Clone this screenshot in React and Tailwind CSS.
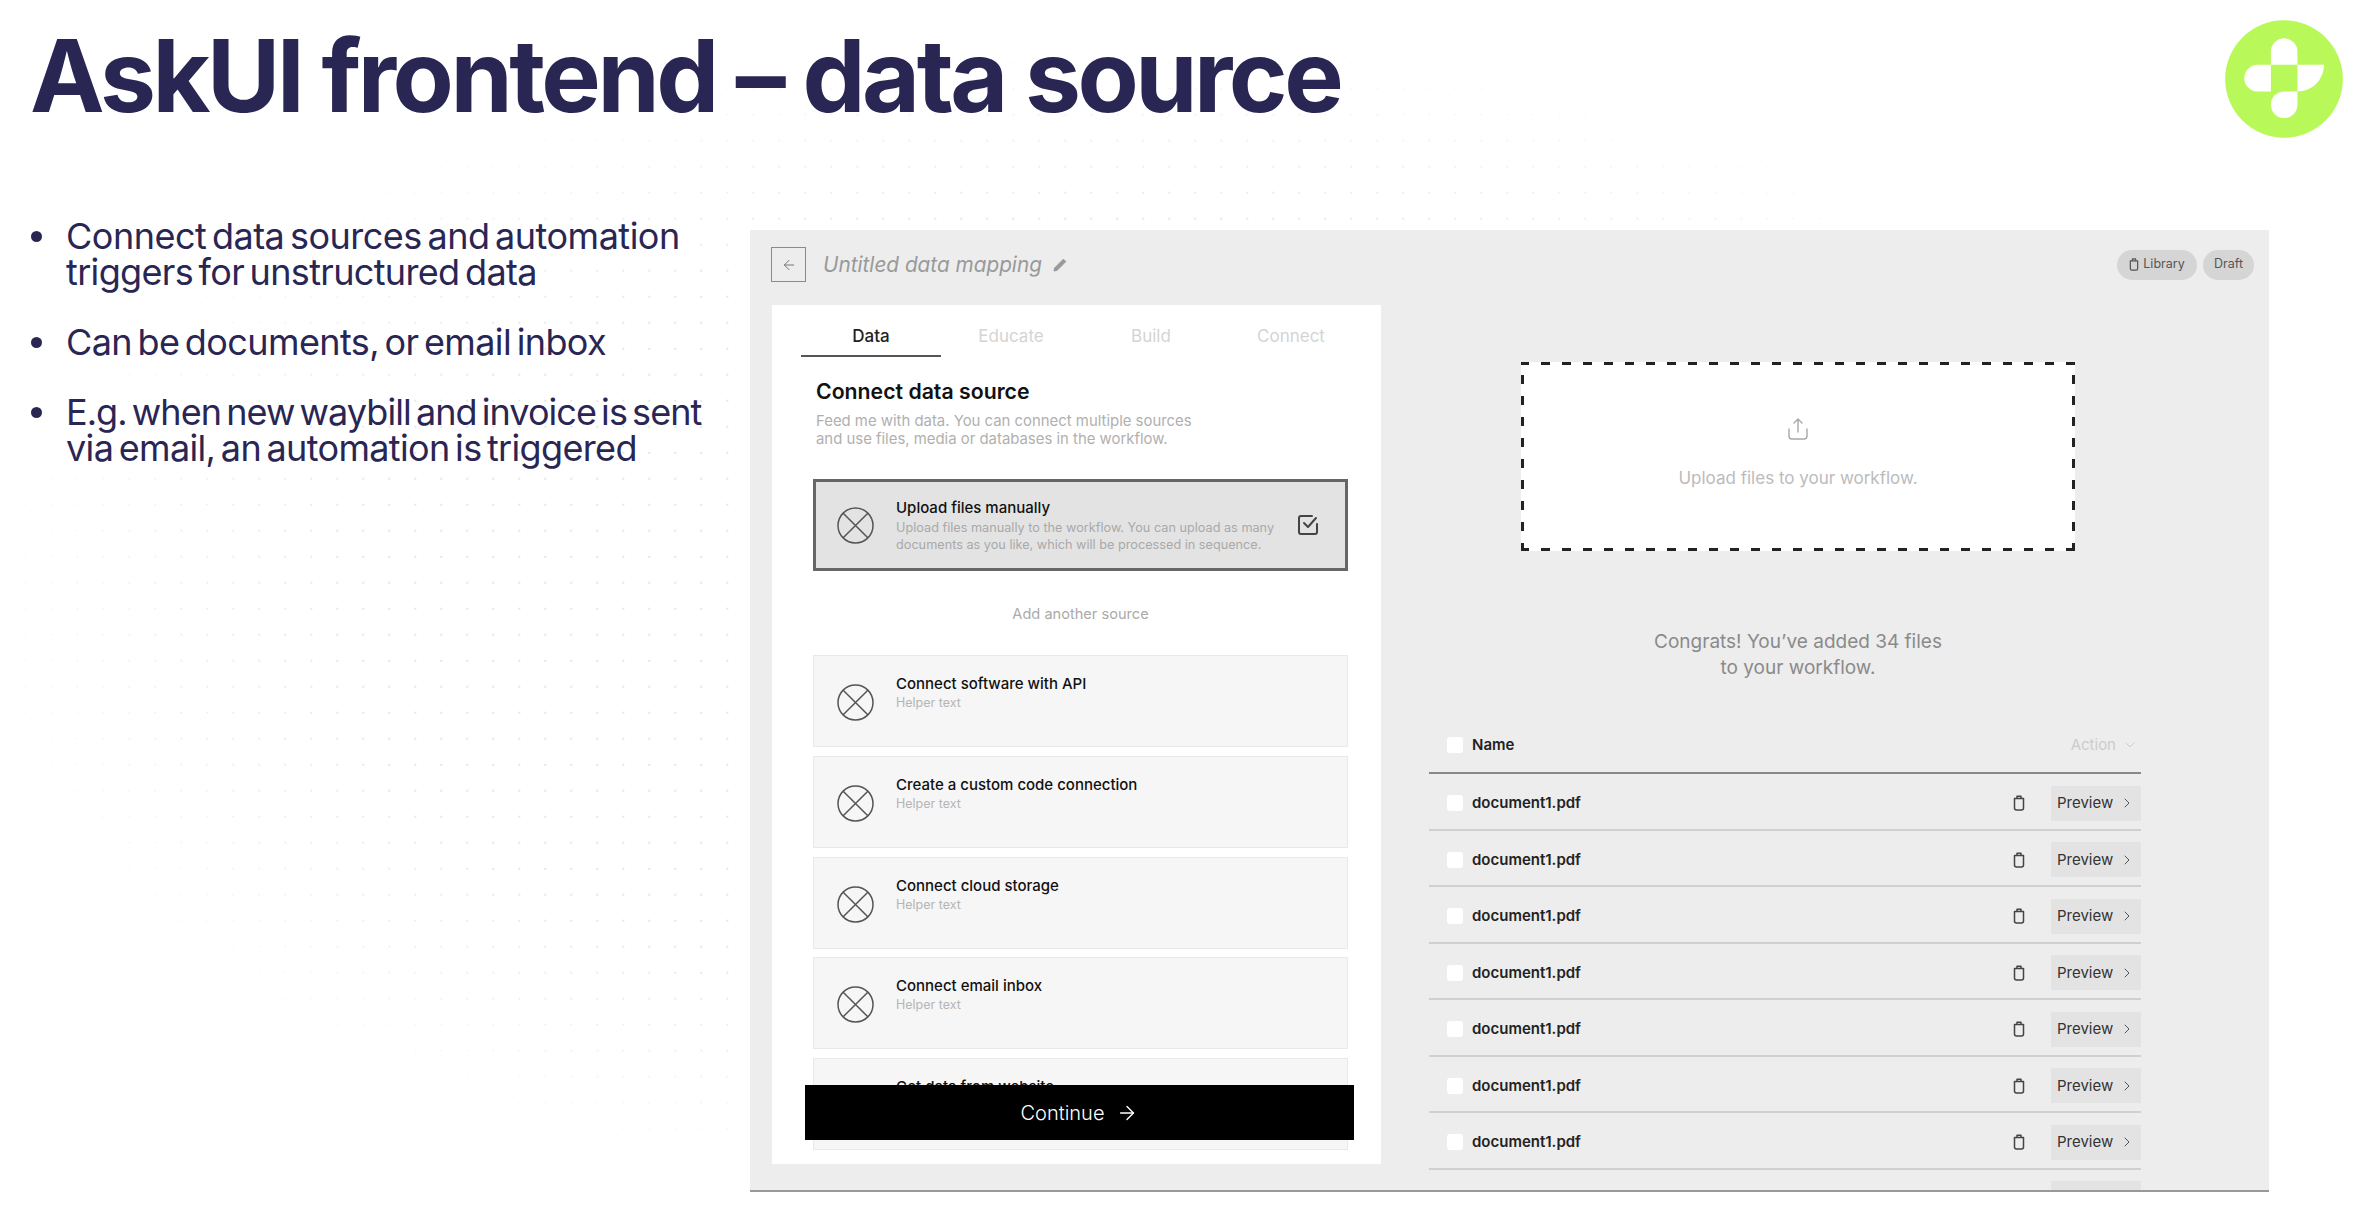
import { ArrowLeft, ArrowRight, ChevronDown, ChevronRight } from 'lucide-react';

const bullets = [
  [
    { text: 'Connect data sources and automation', tracking: 'tracking-[-0.5px]' },
    { text: 'triggers for unstructured data', tracking: 'tracking-[-0.65px]' },
  ],
  [{ text: 'Can be documents, or email inbox', tracking: 'tracking-[-0.6px]' }],
  [
    { text: 'E.g. when new waybill and invoice is sent', tracking: 'tracking-[-0.95px]' },
    { text: 'via email, an automation is triggered', tracking: 'tracking-[-0.65px]' },
  ],
];

const tabs = ['Data', 'Educate', 'Build', 'Connect'];

const sources = [
  'Connect software with API',
  'Create a custom code connection',
  'Connect cloud storage',
  'Connect email inbox',
  'Get data from website',
];

const files = Array.from({ length: 8 }, (_, i) => i);

function Logo() {
  return (
    <svg className="w-[118px] h-[118px]" viewBox="135 60 355 355">
      <circle cx="312.5" cy="237.5" r="177" fill="#b8f858" />
      <g fill="#fff">
        <path d="M273 195v-40a40 40 0 0 1 80 0v40z" />
        <path d="M273 195v80h-40a40 40 0 0 1 0-80z" />
        <path d="M353 195h80a80 80 0 0 1-80 80z" />
        <path d="M353 275v40a40 40 0 0 1-80 0a40 40 0 0 1 40-40z" />
      </g>
    </svg>
  );
}

function CrossCircle() {
  return (
    <svg className="w-[37px] h-[37px] shrink-0" viewBox="0 0 37 37" fill="none" stroke="#555" strokeWidth="1.5">
      <circle cx="18.5" cy="18.5" r="17.5" />
      <path d="M6.2 6.2l24.6 24.6M30.8 6.2L6.2 30.8" />
    </svg>
  );
}

function CheckBoxIcon() {
  return (
    <svg className="w-6 h-6" viewBox="0 0 24 24" fill="none" stroke="#444" strokeWidth="2" strokeLinecap="round" strokeLinejoin="round">
      <path d="M21 11v8a2 2 0 0 1-2 2H5a2 2 0 0 1-2-2V5a2 2 0 0 1 2-2h11" />
      <path d="M8 10l4 4 8-9" />
    </svg>
  );
}

function TrashIcon({ className }) {
  return (
    <svg className={className} viewBox="0 0 12 16" fill="none" stroke="currentColor" strokeWidth="1.5" strokeLinejoin="round">
      <path d="M1.5 3.5h9V13a2 2 0 0 1-2 2h-5a2 2 0 0 1-2-2z" />
      <path d="M4 3.5V1.2h4v2.3" />
    </svg>
  );
}

function UploadIcon() {
  return (
    <svg className="w-[22px] h-[24px]" viewBox="0 0 22 24" fill="none" stroke="#a8a8a8" strokeWidth="1.4" strokeLinecap="round" strokeLinejoin="round">
      <path d="M11 15V2M7 6l4-4 4 4" />
      <path d="M2 12v7a3 3 0 0 0 3 3h12a3 3 0 0 0 3-3v-7" />
    </svg>
  );
}

function PencilIcon() {
  return (
    <svg className="w-4 h-4 ml-[10px]" viewBox="0 0 16 16" fill="#999" stroke="#999" strokeWidth="1" strokeLinejoin="round">
      <path d="M2 14l.6-3L11.4 2.2l2.4 2.4L5 13.4z" />
    </svg>
  );
}

function SourceRow({ title, selected, children }) {
  return (
    <div
      className={
        selected
          ? 'h-[92px] border-[3px] border-[#666] bg-[#e3e3e3] flex items-center pl-[21px] pr-[25px]'
          : 'h-[92px] border border-[#e9e9e9] bg-[#f6f6f6] flex items-start pl-[23px] pt-[28px]'
      }
    >
      <CrossCircle />
      <div className={selected ? 'ml-[22px] flex-1' : 'ml-[22px] -mt-[10px]'}>
        <p className="text-[15px] leading-[20px] font-medium text-[#111]">{title}</p>
        {children}
      </div>
      {selected && <CheckBoxIcon />}
    </div>
  );
}

function FileRow() {
  return (
    <div className="h-[56.5px] shrink-0 border-b-2 border-[#d0d0d0] flex items-center pl-[18px] pt-[4px]">
      <span className="w-4 h-4 rounded-[3px] bg-white" />
      <span className="ml-[9px] text-[15px] font-semibold text-[#222] flex-1">document1.pdf</span>
      <TrashIcon className="w-3 h-4 mr-[26px] text-[#444]" />
      <div className="w-[90px] h-[35px] bg-[#e3e3e3] flex items-center pl-[6px] text-[15px] text-[#333]">
        Preview
        <ChevronRight className="w-4 h-4 ml-[6px] text-[#555]" strokeWidth={1.5} />
      </div>
    </div>
  );
}

export default function App() {
  return (
    <div className="w-[2356px] h-[1216px] overflow-hidden flex flex-col bg-white font-[Inter,sans-serif] [background-image:radial-gradient(ellipse_1150px_600px_at_1100px_620px,transparent_65%,white_100%),radial-gradient(circle,#e6e6e6_1.1px,transparent_1.5px)] [background-size:100%_100%,26px_26px] [background-position:0_0,12.3px_-2.3px]">
      {/* Slide header */}
      <div className="h-[216px] shrink-0 flex justify-between">
        <h1 className="pl-[30px] pt-[16px] text-[100px] leading-[120px] font-bold text-[#2a2654] tracking-[-0.035em]">
          AskUI frontend – data source
        </h1>
        <div className="pt-[20px] pr-[13px]">
          <Logo />
        </div>
      </div>

      <div className="flex-1 flex">
        {/* Bullets */}
        <ul className="w-[750px] shrink-0 pl-[31px] pt-[2px] flex flex-col gap-[34px] text-[36px] leading-[36px] text-[#2a2654] [word-spacing:-4px]">
          {bullets.map((lines) => (
            <li key={lines[0].text} className="flex">
              <span className="w-[11px] h-[11px] mt-[13px] mr-[24px] rounded-full bg-[#2a2654] shrink-0" />
              <div>
                {lines.map((line) => (
                  <p key={line.text} className={`whitespace-nowrap ${line.tracking}`}>{line.text}</p>
                ))}
              </div>
            </li>
          ))}
        </ul>

        {/* Embedded app screenshot */}
        <div className="w-[1519px] h-[962px] mt-[14px] bg-[#ededed] border-b-2 border-[#999] overflow-hidden flex flex-col">
          <div className="h-[75px] shrink-0 pl-[21px] pr-[15px] pb-[6px] flex items-center justify-between">
            <div className="flex items-center">
              <div className="w-[35px] h-[35px] border-[1.5px] border-[#8a8a8a] flex items-center justify-center">
                <ArrowLeft className="w-4 h-4 text-[#777]" strokeWidth={1.5} />
              </div>
              <span className="ml-[17px] text-[20.75px] italic text-[#999]">Untitled data mapping</span>
              <PencilIcon />
            </div>
            <div className="flex gap-[6px] text-[12.5px] text-[#555]">
              <div className="w-[80px] h-[30px] rounded-full bg-[#d5d5d5] flex items-center justify-center gap-[4px]">
                <TrashIcon className="w-[10px] h-[13px]" />
                Library
              </div>
              <div className="w-[51px] h-[30px] rounded-full bg-[#d5d5d5] flex items-center justify-center">Draft</div>
            </div>
          </div>

          <div className="flex-1 min-h-0 flex pl-[22px]">
            {/* Wizard card */}
            <div className="w-[609px] h-[859px] shrink-0 bg-white relative overflow-hidden">
              <div className="ml-[29px] mt-[15px] flex">
                {tabs.map((tab, i) => (
                  <div
                    key={tab}
                    className={
                      i === 0
                        ? 'w-[140px] h-[37px] border-b-2 border-[#555] text-center text-[17px] leading-[33px] font-medium text-[#222]'
                        : 'w-[140px] h-[37px] text-center text-[17px] leading-[33px] text-[#d4d4d4]'
                    }
                  >
                    {tab}
                  </div>
                ))}
              </div>
              <div className="ml-[44px]">
                <h2 className="mt-[20px] text-[21.25px] leading-[28px] font-semibold text-[#111]">Connect data source</h2>
                <p className="mt-[7px] text-[14.9px] leading-[18px] text-[#b0b0b0]">
                  Feed me with data. You can connect multiple sources
                  <br />
                  and use files, media or databases in the workflow.
                </p>
              </div>
              <div className="ml-[41px] w-[535px] mt-[31px]">
                <SourceRow title="Upload files manually" selected>
                  <p className="mt-[1px] text-[12.7px] leading-[17px] text-[#a9a9a9] whitespace-nowrap">
                    Upload files manually to the workflow. You can upload as many
                    <br />
                    documents as you like, which will be processed in sequence.
                  </p>
                </SourceRow>
                <p className="mt-[33px] mb-[31px] text-center text-[14.6px] leading-[20px] text-[#aaa]">Add another source</p>
                <div className="flex flex-col gap-[8.75px]">
                  {sources.map((title) => (
                    <SourceRow key={title} title={title}>
                      <p className="mt-[1px] text-[12.5px] leading-[16px] text-[#b5b5b5]">Helper text</p>
                    </SourceRow>
                  ))}
                </div>
              </div>
              <div className="absolute left-[33px] top-[780px] w-[549px] h-[55px] bg-black flex items-center justify-center gap-[12px] text-white text-[20px] font-light">
                Continue
                <ArrowRight className="w-[22px] h-[22px]" strokeWidth={1.5} />
              </div>
            </div>

            {/* Upload side */}
            <div className="ml-[48px] w-[712px] shrink-0 flex flex-col">
              <div className="ml-[92px] w-[554px] shrink-0">
                <div className="mt-[57px] h-[189px] bg-white bg-no-repeat [background-image:repeating-linear-gradient(90deg,#222_-1px_8px,transparent_8px_20px),repeating-linear-gradient(90deg,#222_-1px_8px,transparent_8px_20px),repeating-linear-gradient(0deg,#222_-1px_8px,transparent_8px_20px),repeating-linear-gradient(0deg,#222_-1px_8px,transparent_8px_20px)] [background-size:100%_3px,100%_3px,3px_100%,3px_100%] [background-position:0_0,0_100%,0_0,100%_0] flex flex-col items-center pt-[55px]">
                  <UploadIcon />
                  <p className="mt-[25px] text-[17px] leading-[24px] text-[#bbb]">Upload files to your workflow.</p>
                </div>
                <p className="mt-[78px] text-center text-[19px] leading-[26px] text-[#8a8a8a]">
                  Congrats! You’ve added 34 files
                  <br />
                  to your workflow.
                </p>
              </div>

              <div className="mt-[37px] h-[56px] shrink-0 border-b-2 border-[#888] flex items-center pl-[18px]">
                <span className="w-4 h-4 rounded-[3px] bg-white" />
                <span className="ml-[9px] text-[15px] font-semibold text-[#222] flex-1">Name</span>
                <span className="text-[15px] text-[#ccc]">Action</span>
                <ChevronDown className="w-4 h-4 ml-[6px] mr-[3px] text-[#ccc]" strokeWidth={1.5} />
              </div>
              {files.map((i) => (
                <FileRow key={i} />
              ))}
            </div>
          </div>
        </div>
      </div>
    </div>
  );
}
